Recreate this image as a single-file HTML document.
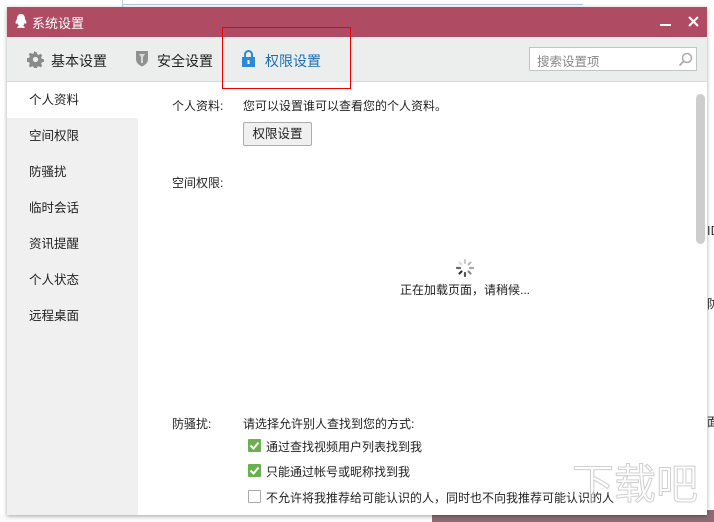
<!DOCTYPE html>
<html style="overflow:hidden;width:714px;height:522px"><head><meta charset="utf-8"><style>
*{margin:0;padding:0;box-sizing:border-box}
body{width:714px;height:522px;overflow:hidden;background:#fff;position:relative;font-family:"Liberation Sans","Noto Sans CJK SC",sans-serif;font-size:12px;color:#222}
.a{position:absolute}
.win{left:7px;top:7px;width:700px;height:508px;box-shadow:0 1px 4px rgba(0,0,0,.35);background:#fff;overflow:hidden}
.title{left:0;top:0;width:700px;height:30px;background:#af4c63;color:#fff;font-size:13px}
.tabs{left:0;top:30px;width:700px;height:45px;background:#eceeed;border-bottom:1px solid #d8d8d8}
.tab{top:14px;font-size:14px;color:#222}
.side{left:0;top:75px;width:131px;height:433px;background:#f0f0f0}
.si{left:0;width:131px;height:36px;line-height:36px;padding-left:22px;font-size:12.5px}
.t{font-size:12px;white-space:nowrap}
.cb{width:13px;height:13px;border-radius:1px}
</style></head><body>
<div class="a" style="left:0;top:515px;width:714px;height:7px;background:#fafafa"></div>
<div class="a" style="left:432px;top:510px;width:282px;height:12px;background:#8c6c74"></div>
<div class="a" style="left:122px;top:0;width:1px;height:7px;background:#c8d0e8"></div>
<div class="a" style="left:123px;top:4px;width:460px;height:1px;background:#b8c4e0"></div>
<div class="a win">
 <div class="a title">
  <svg class="a" style="left:7px;top:6px" width="14" height="16" viewBox="0 0 14 16"><path d="M7 1C4 1 3 3.5 3 6 2 7.5 1 9.5 2 11c.6 0 1-.8 1.3-1.2C3.7 11.5 4.5 12.5 5 13c-1 .3-2 .8-1.800 1.5.3.7 2.5.5 3.8.1 1.3.4 3.5.6 3.8-.1.2-.7-.8-1.2-1.8-1.5.5-.5 1.3-1.5 1.7-3.2.3.4.7 1.2 1.3 1.2 1-1.5 0-3.5-1-5C11 3.5 10 1 7 1z" fill="#fff"/></svg>
  <div class="a" style="left:25px;top:6px">系统设置</div>
  <div class="a" style="left:653px;top:17px;width:11px;height:2px;background:#fff"></div>
  <svg class="a" style="left:681px;top:9px" width="11" height="11"><path d="M1 1L10 10M10 1L1 10" stroke="#fff" stroke-width="2"/></svg>
 </div>
 <div class="a tabs">
  <svg class="a" style="left:20px;top:14px" width="17" height="17" viewBox="0 0 16 16"><path d="M8 1l1.2 0 .4 2 1.5.7 1.7-1.1 1.6 1.6-1.1 1.7.7 1.5 2 .4v2.4l-2 .4-.7 1.5 1.1 1.7-1.6 1.6-1.700-1.1-1.5.7-.4 2H6.8l-.4-2-1.5-.7-1.7 1.1-1.6-1.6 1.1-1.7-.7-1.5-2-.4V6.8l2-.4.7-1.5-1.1-1.7 1.6-1.6 1.7 1.1 1.5-.7.4-2z" fill="#8a8a8a"/><circle cx="8" cy="8" r="2.5" fill="#eceeed"/></svg>
  <div class="a tab" style="left:44px">基本设置</div>
  <svg class="a" style="left:128px;top:13px" width="14" height="17" viewBox="0 0 14 17"><path d="M1 1h12v8c0 4-3 6-6 7.5C4 15 1 13 1 9z" fill="#909090"/><path d="M4 4h6l-2 3v6H6V7z" fill="#d8d8d8"/></svg>
  <div class="a tab" style="left:150px">安全设置</div>
  <svg class="a" style="left:235px;top:13px" width="13" height="17" viewBox="0 0 13 17"><path d="M3 7V4.5a3.5 3.5 0 0 1 7 0V7" stroke="#2a8ad8" stroke-width="2" fill="none"/><rect x="0" y="7" width="13" height="10" fill="#2a8ad8"/><rect x="5.5" y="10" width="2" height="4" fill="#fff"/></svg>
  <div class="a tab" style="left:258px;color:#1a6eb8">权限设置</div>
  <div class="a" style="left:522px;top:10px;width:168px;height:24px;background:#fff;border:1px solid #c4c4c4"></div>
  <div class="a" style="left:530px;top:14px;color:#888;font-size:12.5px">搜索设置项</div>
  <svg class="a" style="left:671px;top:15px" width="15" height="15"><circle cx="9" cy="6" r="4.5" stroke="#aaa" stroke-width="1.5" fill="none"/><path d="M6 9L1.5 13.5" stroke="#aaa" stroke-width="1.8"/></svg>
 </div>
 <div class="a side">
  <div class="a si" style="top:0;background:#fff">个人资料</div>
  <div class="a si" style="top:36px">空间权限</div>
  <div class="a si" style="top:72px">防骚扰</div>
  <div class="a si" style="top:108px">临时会话</div>
  <div class="a si" style="top:144px">资讯提醒</div>
  <div class="a si" style="top:180px">个人状态</div>
  <div class="a si" style="top:216px">远程桌面</div>
 </div>
 <div class="a t" style="left:165px;top:90px">个人资料:</div>
 <div class="a t" style="left:236px;top:90px">您可以设置谁可以查看您的个人资料。</div>
 <div class="a" style="left:236px;top:115px;width:69px;height:24px;border:1px solid #adadad;border-radius:2px;background:#f0f0f0;font-size:12.5px;text-align:center;line-height:22px">权限设置</div>
 <div class="a t" style="left:165px;top:167px">空间权限:</div>
 <svg class="a" style="left:448px;top:251px" width="20" height="20" viewBox="0 0 20 20"><g stroke-width="2.2" stroke-linecap="round"><path d="M10 2v3" stroke="#ccc"/><path d="M15.5 4.5l-2 2" stroke="#bbb"/><path d="M18 10h-3" stroke="#aaa"/><path d="M15.5 15.5l-2-2" stroke="#888"/><path d="M10 18v-3" stroke="#555"/><path d="M4.5 15.5l2-2" stroke="#333"/><path d="M2 10h3" stroke="#666"/><path d="M4.5 4.5l2 2" stroke="#ddd"/></g></svg>
 <div class="a t" style="left:393px;top:274px">正在加载页面，请稍候...</div>
 <div class="a t" style="left:165px;top:408px">防骚扰:</div>
 <div class="a t" style="left:236px;top:408px">请选择允许别人查找到您的方式:</div>
 <svg class="a cb" style="left:241px;top:432px" width="13" height="13"><rect width="13" height="13" fill="#6ab04c"/><path d="M2.5 6.5l3 3 5-6" stroke="#fff" stroke-width="2" fill="none"/></svg>
 <div class="a t" style="left:259px;top:431px">通过查找视频用户列表找到我</div>
 <svg class="a cb" style="left:241px;top:457px" width="13" height="13"><rect width="13" height="13" fill="#6ab04c"/><path d="M2.5 6.5l3 3 5-6" stroke="#fff" stroke-width="2" fill="none"/></svg>
 <div class="a t" style="left:259px;top:456px">只能通过帐号或昵称找到我</div>
 <div class="a cb" style="left:241px;top:483px;border:1px solid #aaa;background:#fff"></div>
 <div class="a t" style="left:259px;top:482px">不允许将我推荐给可能认识的人，同时也不向我推荐可能认识的人</div>
 <div class="a" style="left:689px;top:87px;width:9px;height:150px;background:#cdcdcd;border-radius:5px"></div>
</div>
<div class="a" style="left:222px;top:27px;width:129px;height:62px;border:1px solid #e00"></div>
<div class="a" style="left:707px;top:222px;font-size:12px;color:#222;font-family:'Noto Sans CJK SC'">ID</div>
<div class="a" style="left:707px;top:295px;font-size:12px;color:#222;font-family:'Noto Sans CJK SC'">防</div>
<div class="a" style="left:707px;top:413px;font-size:12px;color:#222;font-family:'Noto Sans CJK SC'">面</div>
<div class="a" style="left:572px;top:452px;width:140px;white-space:nowrap;font-size:42px;line-height:60px;color:rgba(255,255,255,.55);font-family:'Noto Sans CJK SC';-webkit-text-stroke:1px rgba(160,160,160,.5)">下载吧</div>
</body></html>
